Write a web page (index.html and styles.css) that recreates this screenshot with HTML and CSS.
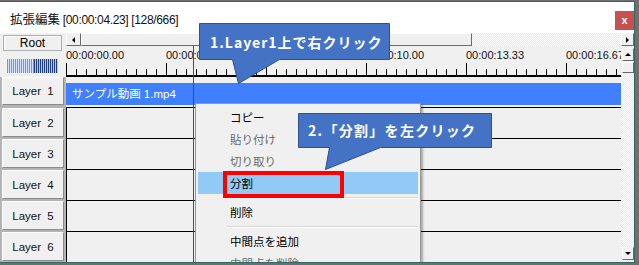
FILE: index.html
```html
<!DOCTYPE html>
<html lang="ja">
<head>
<meta charset="utf-8">
<title>拡張編集</title>
<link rel="stylesheet" href="styles.css">
</head>
<body>
<div class="window">
  <div class="titlebar">
    <span class="title">拡張編集 <span class="title-num">[00:00:04.23] [128/666]</span></span>
    <span class="close">x</span>
  </div>
  <div class="client">
    <div class="lefttop">
      <div class="root-btn">Root</div>
      <div class="meter"><span class="meter-l"></span><span class="meter-r"></span></div>
    </div>
    <div class="hscroll">
      <div class="sbtn hbtn-left"><i class="tri tri-left"></i></div>
      <div class="hthumb"></div>
      <div class="hspace"></div>
      <div class="sbtn hbtn-right"><i class="tri tri-right"></i></div>
    </div>
    <div class="ruler">
      <span class="tlabel">00:00:00.00</span>
      <span class="tlabel">00:00:03.33</span>
      <span class="tlabel">00:00:06.67</span>
      <span class="tlabel">00:00:10.00</span>
      <span class="tlabel">00:00:13.33</span>
      <span class="tlabel">00:00:16.67</span>
    </div>
    <div class="vscroll">
      <div class="sbtn vbtn"><i class="tri tri-up"></i></div>
      <div class="vthumb"></div>
      <div class="vspace"></div>
      <div class="sbtn vbtn"><i class="tri tri-down"></i></div>
    </div>

    <div class="lcell first"><div class="lbtn">Layer 1</div></div>
    <div class="trow first"><div class="clip">サンプル動画 1.mp4</div></div>
    <div class="lcell"><div class="lbtn">Layer 2</div></div>
    <div class="trow"></div>
    <div class="lcell"><div class="lbtn">Layer 3</div></div>
    <div class="trow"></div>
    <div class="lcell"><div class="lbtn">Layer 4</div></div>
    <div class="trow"></div>
    <div class="lcell"><div class="lbtn">Layer 5</div></div>
    <div class="trow"></div>
    <div class="lcell"><div class="lbtn">Layer 6</div></div>
    <div class="trow"></div>
  </div>

  <div class="cursor"></div>

  <div class="menu">
    <div class="mi">コピー</div>
    <div class="mi dis">貼り付け</div>
    <div class="mi dis">切り取り</div>
    <div class="mi hl">分割</div>
    <div class="msep"></div>
    <div class="mi">削除</div>
    <div class="msep"></div>
    <div class="mi">中間点を追加</div>
    <div class="mi dis">中間点を削除</div>
  </div>

  <div class="redbox"></div>

  <div class="callout c1">
    <svg width="192" height="62" viewBox="0 0 192 62"><path d="M0.5 0.5 H190.5 V36.5 H80.5 L39.5 60.5 L33.5 36.5 H0.5 Z" fill="#4472c4" stroke="#2f528f" stroke-width="1"/></svg>
    <span class="callout-text">1.Layer1上で右クリック</span>
  </div>

  <div class="callout c2">
    <svg width="195" height="58" viewBox="0 0 195 58"><path d="M0.5 0.5 H193.5 V34.5 H82.5 L27.5 56.5 L31.5 34.5 H0.5 Z" fill="#4472c4" stroke="#2f528f" stroke-width="1"/></svg>
    <span class="callout-text">2.「分割」を左クリック</span>
  </div>
</div>
</body>
</html>
```

FILE: styles.css
```css
* { box-sizing: border-box; }
html, body { margin: 0; padding: 0; }
body {
  width: 639px;
  height: 265px;
  overflow: hidden;
  background: #6f6f6f;
  padding-top: 1px;
  font-family: "Liberation Sans", "Noto Sans CJK JP", sans-serif;
  color: #000;
}

.window {
  position: relative;
  width: 635px;
  height: 262px;
  border: 1px solid #2a6b67;
  border-left: 0;
  overflow: hidden;
  background: #f0f0f0;
}

/* title bar */
.titlebar {
  height: 31px;
  background: #fff;
  display: flex;
  justify-content: space-between;
  align-items: flex-start;
}
.title {
  padding: 9px 0 0 10px;
  font-family: "Noto Sans CJK JP", sans-serif;
  font-size: 12.5px;
  line-height: 16px;
  color: #111;
  white-space: nowrap;
}
.title-num {
  font-family: "Liberation Sans", sans-serif;
  font-size: 12px;
  letter-spacing: -0.35px;
}
.close {
  width: 19px;
  height: 19px;
  margin-top: 9px;
  background: #c75050;
  color: #fff;
  font: bold 11px/18px "Liberation Sans", sans-serif;
  text-align: center;
}

/* client grid */
.client {
  display: grid;
  grid-template-columns: 66px 555px 13px;
  grid-template-rows: 13px 31px 30px repeat(5, 31px);
}

.lefttop {
  grid-column: 1;
  grid-row: 1 / 3;
  padding: 2px 4px 0 3px;
  background: #f0f0f0;
}
.root-btn {
  height: 16px;
  border: 1px solid #adadad;
  box-shadow: inset 1px 1px #fff;
  background: #f0f0f0;
  font-size: 12px;
  line-height: 14px;
  text-align: center;
}
.meter {
  display: flex;
  width: 51px;
  height: 14px;
  margin: 8px 0 0 4px;
}
.meter-l {
  flex: 0 0 27px;
  background: repeating-linear-gradient(90deg, #6a9ae6 0 1px, #d6e2f6 1px 2px);
}
.meter-r {
  flex: 1;
  background: repeating-linear-gradient(90deg, #213f7c 0 1px, #b8c4dc 1px 2px);
}

/* scrollbars */
.hscroll, .vscroll {
  background-color: #f4f4f4;
  background-image: repeating-conic-gradient(#ffffff 0 25%, #e8e8e8 0 50%);
  background-size: 2px 2px;
}
.hscroll {
  grid-column: 2 / 4;
  grid-row: 1;
  display: flex;
}
.sbtn {
  background: #f0f0f0;
  border: 1px solid;
  border-color: #f4f4f4 #6a6a6a #6a6a6a #ffffff;
  display: flex;
  align-items: center;
  justify-content: center;
}
.hbtn-left { width: 15px; }
.hbtn-right { width: 13px; }
.hthumb {
  width: 391px;
  background: #f0f0f0;
  border: 1px solid;
  border-color: #ffffff #6a6a6a #6a6a6a #ffffff;
}
.hspace { flex: 1; }

.vscroll {
  grid-column: 3;
  grid-row: 2 / 9;
  display: flex;
  flex-direction: column;
  padding: 2px 0 2px 1px;
}
.vbtn { height: 13px; }
.vthumb {
  height: 11px;
  margin-top: 1px;
  background: #f0f0f0;
  border: 1px solid;
  border-color: #ffffff #6a6a6a #6a6a6a #ffffff;
}
.vspace { flex: 1; }

.tri { width: 0; height: 0; display: block; }
.tri-left { border-top: 3px solid transparent; border-bottom: 3px solid transparent; border-right: 3px solid #000; }
.tri-right { border-top: 3px solid transparent; border-bottom: 3px solid transparent; border-left: 3px solid #000; }
.tri-up { border-left: 3px solid transparent; border-right: 3px solid transparent; border-bottom: 3px solid #000; }
.tri-down { border-left: 3px solid transparent; border-right: 3px solid transparent; border-top: 3px solid #000; }

/* ruler */
.ruler {
  grid-column: 2;
  grid-row: 2;
  display: flex;
  overflow: hidden;
  background:
    linear-gradient(#000, #000) left bottom / 100% 2px no-repeat,
    repeating-linear-gradient(90deg, #000 0 1px, transparent 1px 100px) left bottom / 100% 14px no-repeat,
    repeating-linear-gradient(90deg, #000 0 1px, transparent 1px 10px) left bottom / 100% 8px no-repeat,
    #f0f0f0;
}
.tlabel {
  flex: 0 0 100px;
  font-size: 11px;
  line-height: 13px;
  padding-top: 3px;
  white-space: nowrap;
  overflow: hidden;
  color: #111;
}

/* layers */
.lcell {
  grid-column: 1;
  padding: 1px 2px 1px 2px;
  background: #b4b4b4;
}
.lcell.first { padding-top: 0; padding-bottom: 2px; }
.lbtn {
  height: 100%;
  background: #f0f0f0;
  border: 1px solid;
  border-color: #ffffff #8a8a8a #8a8a8a #ffffff;
  display: flex;
  align-items: center;
  justify-content: center;
  font-size: 11.5px;
  word-spacing: 3px;
  color: #111;
}

.trow {
  grid-column: 2;
  background: #f0f0f0;
  border-top: 1px solid #000;
  border-left: 1px solid #000;
}
.trow.first {
  border: 0;
  padding-top: 6px;
}
.clip {
  height: 22px;
  background: #4080ff;
  color: #fff;
  font-size: 11.5px;
  line-height: 22px;
  padding-left: 6px;
  white-space: nowrap;
}

/* overlays */
.cursor {
  position: absolute;
  left: 193px;
  top: 44px;
  width: 1px;
  height: 220px;
  background: #e01010;
}

.menu {
  position: absolute;
  left: 195px;
  top: 101px;
  width: 226px;
  height: 200px;
  padding: 2px 0;
  background: #f0f0f0;
  border: 1px solid #979797;
  box-shadow: 2px 2px 2px rgba(0, 0, 0, 0.3);
  font-family: "Noto Sans CJK JP", sans-serif;
  font-size: 11.5px;
}
.mi {
  height: 22px;
  line-height: 22px;
  margin: 0 2px;
  padding-left: 32px;
  color: #000;
  white-space: nowrap;
}
.mi.dis { color: #6d6d6d; }
.mi.hl { background: #91c9f7; }
.msep {
  margin: 3px 2px 2px 31px;
  border-top: 1px solid #d7d7d7;
  border-bottom: 1px solid #ffffff;
}

.redbox {
  position: absolute;
  left: 223px;
  top: 169px;
  width: 121px;
  height: 27px;
  border: 4px solid #ff0000;
}

.callout {
  position: absolute;
  color: #fff;
  font-family: "Noto Sans CJK JP", sans-serif;
  font-weight: bold;
  white-space: nowrap;
}
.callout svg { position: absolute; left: 0; top: 0; }
.callout-text { position: relative; display: block; font-size: 14px; }
.c1 { left: 199px; top: 21px; width: 192px; height: 62px; }
.c1 .callout-text { height: 37px; line-height: 37px; padding: 1px 0 0 11px; letter-spacing: 1px; }
.c2 { left: 298px; top: 111px; width: 195px; height: 58px; }
.c2 .callout-text { height: 35px; line-height: 35px; padding-left: 10px; letter-spacing: 1.3px; }
```
